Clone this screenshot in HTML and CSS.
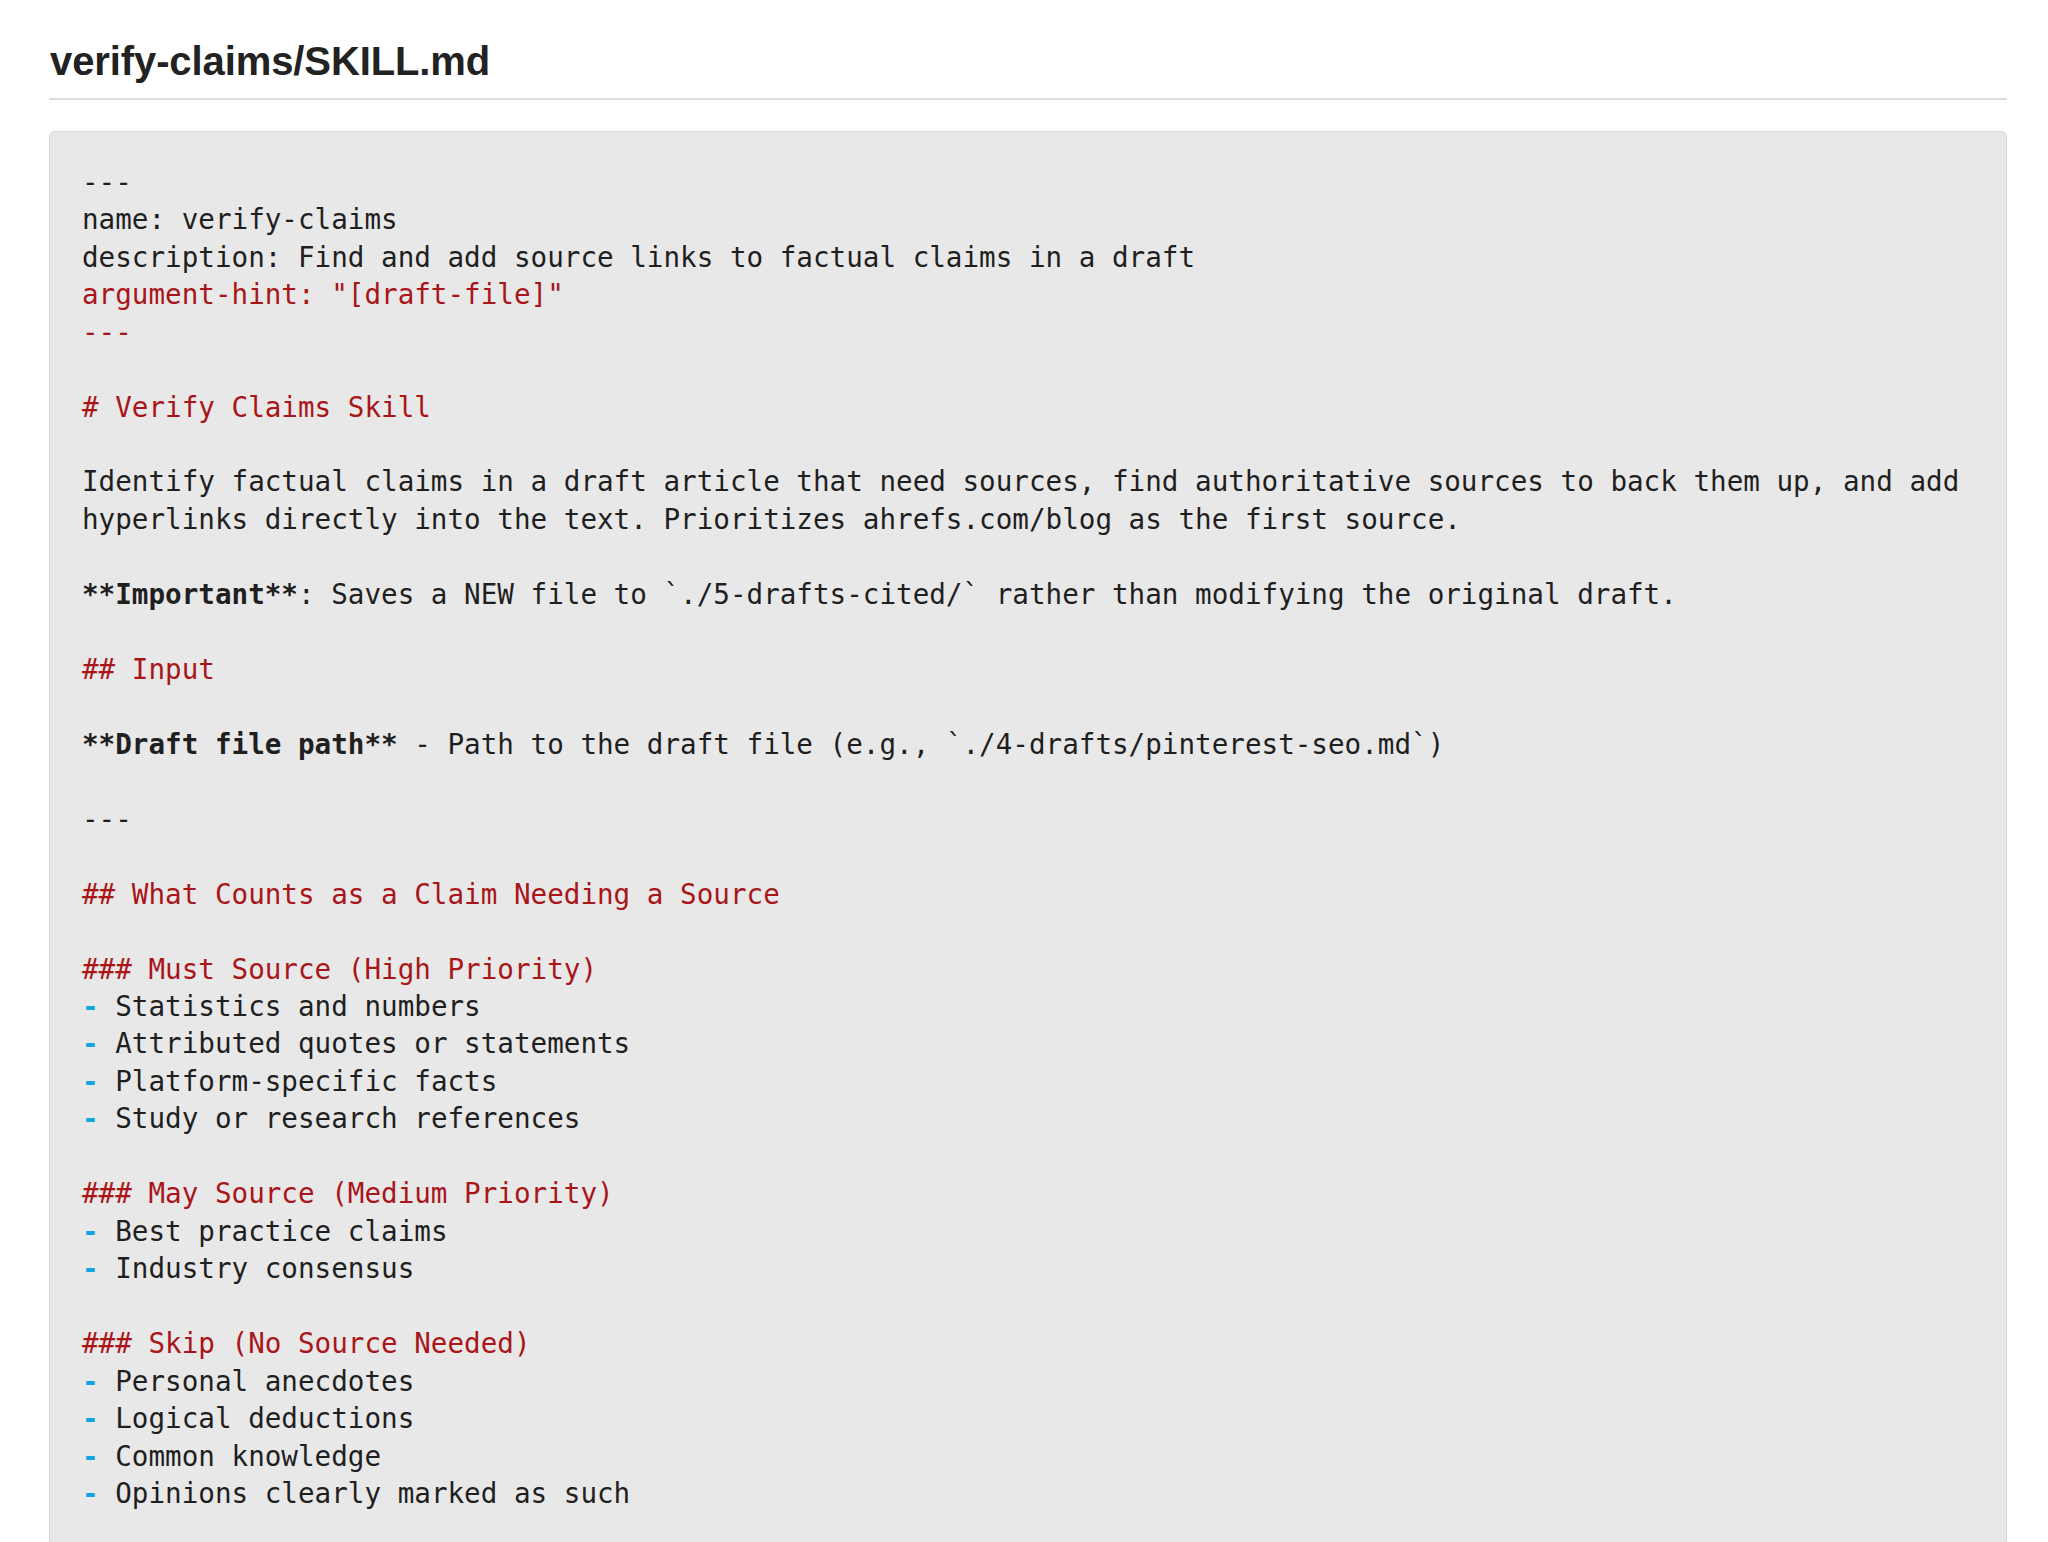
FILE: index.html
```html
<!DOCTYPE html>
<html lang="en">
<head>
<meta charset="utf-8">
<title>verify-claims/SKILL.md</title>
<link rel="stylesheet" href="styles.css">
</head>
<body>
<main class="page">
<h1 class="file-title">verify-claims/SKILL.md</h1>
<pre class="code-block"><code>---
name: verify-claims
description: Find and add source links to factual claims in a draft
<span class="red">argument-hint: "[draft-file]"</span>
<span class="red">---</span>

<span class="red"># Verify Claims Skill</span>

Identify factual claims in a draft article that need sources, find authoritative sources to back them up, and add
hyperlinks directly into the text. Prioritizes ahrefs.com/blog as the first source.

<span class="bold">**Important**</span>: Saves a NEW file to `./5-drafts-cited/` rather than modifying the original draft.

<span class="red">## Input</span>

<span class="bold">**Draft file path**</span> - Path to the draft file (e.g., `./4-drafts/pinterest-seo.md`)

---

<span class="red">## What Counts as a Claim Needing a Source</span>

<span class="red">### Must Source (High Priority)</span>
<span class="blue">-</span> Statistics and numbers
<span class="blue">-</span> Attributed quotes or statements
<span class="blue">-</span> Platform-specific facts
<span class="blue">-</span> Study or research references

<span class="red">### May Source (Medium Priority)</span>
<span class="blue">-</span> Best practice claims
<span class="blue">-</span> Industry consensus

<span class="red">### Skip (No Source Needed)</span>
<span class="blue">-</span> Personal anecdotes
<span class="blue">-</span> Logical deductions
<span class="blue">-</span> Common knowledge
<span class="blue">-</span> Opinions clearly marked as such

</code></pre>
</main>
</body>
</html>
```
FILE: styles.css
```css
html, body {
  margin: 0;
  padding: 0;
  background: #ffffff;
}

.page {
  padding: 39px 41px 0 49px;
  overflow: hidden;
  height: 1542px;
  box-sizing: border-box;
}

.file-title {
  margin: 0;
  padding: 0 0 14px 1px;
  font-family: "Liberation Sans", Arial, sans-serif;
  font-weight: 700;
  font-size: 40px;
  letter-spacing: -0.1px;
  line-height: 44.7px;
  color: #222222;
  border-bottom: 2px solid #dedede;
}

.code-block {
  margin: 31px 0 0 0;
  padding: 32px 31px 120px 32px;
  background: #e8e8e8;
  border: 1px solid #dadada;
  border-radius: 6px;
  font-family: "DejaVu Sans Mono", Menlo, monospace;
  font-size: 27.6px;
  line-height: 37.47px;
  color: #1f1f1f;
  white-space: pre-wrap;
}

.code-block code {
  font-family: inherit;
}

.red {
  color: #a8161a;
}

.blue {
  color: #12a5e0;
  font-weight: 700;
}

.bold {
  font-weight: 700;
}
```
